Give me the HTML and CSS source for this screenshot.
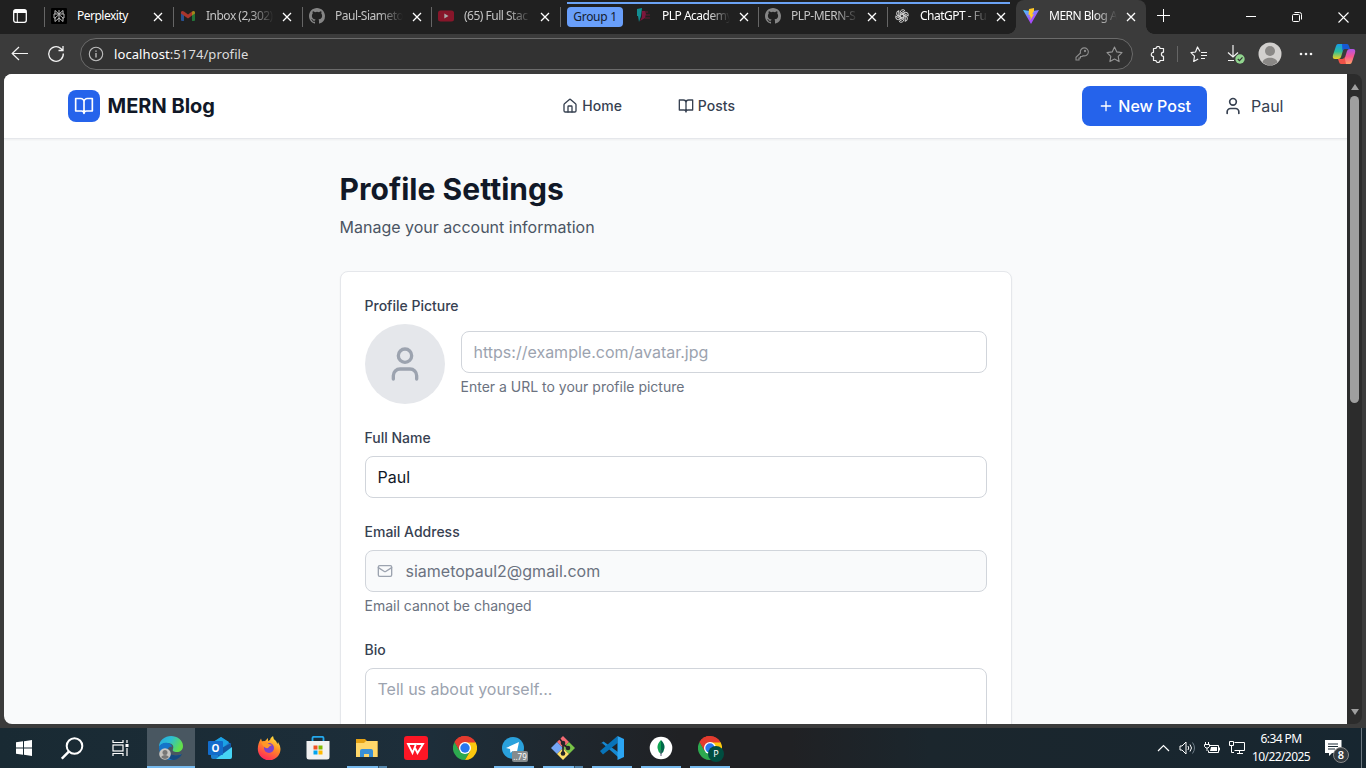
FILE: index.html
```html
<!DOCTYPE html>
<html lang="en">
<head>
<meta charset="utf-8">
<title>MERN Blog App</title>
<link rel="stylesheet" href="styles.css">
</head>
<body>
<svg class="defs" aria-hidden="true">
  <defs>
    <symbol id="close" viewBox="0 0 10 10"><path d="M1 1l8 8M9 1l-8 8" stroke="#fff" stroke-width="1.3" fill="none"/></symbol>
    <symbol id="github" viewBox="0 0 16 16"><path fill="#858585" d="M8 0C3.58 0 0 3.58 0 8c0 3.54 2.29 6.53 5.47 7.59.4.07.55-.17.55-.38v-1.49c-2.23.48-2.7-.95-2.7-.95-.36-.92-.89-1.17-.89-1.17-.73-.5.06-.49.06-.49.8.06 1.23.83 1.23.83.71 1.22 1.87.87 2.33.66.07-.52.28-.87.5-1.07-1.77-.2-3.64-.89-3.64-3.95 0-.87.31-1.59.82-2.15-.08-.2-.36-1.01.08-2.12 0 0 .67-.22 2.2.82a7.6 7.6 0 0 1 4 0c1.53-1.04 2.2-.82 2.2-.82.44 1.11.16 1.92.08 2.12.51.56.82 1.28.82 2.15 0 3.07-1.87 3.75-3.65 3.95.29.25.54.73.54 1.48v2.2c0 .21.15.46.55.38A8 8 0 0 0 16 8c0-4.42-3.58-8-8-8z"/></symbol>
    <symbol id="book" viewBox="0 0 24 24"><path d="M2 3h6a4 4 0 0 1 4 4v14a3 3 0 0 0-3-3H2zM22 3h-6a4 4 0 0 0-4 4v14a3 3 0 0 1 3-3h7z" fill="none" stroke="currentColor" stroke-width="2" stroke-linecap="round" stroke-linejoin="round"/></symbol>
    <symbol id="user" viewBox="0 0 24 24"><g fill="none" stroke="currentColor" stroke-width="2" stroke-linecap="round" stroke-linejoin="round"><path d="M19 21v-2a4 4 0 0 0-4-4H9a4 4 0 0 0-4 4v2"/><circle cx="12" cy="7" r="4"/></g></symbol>
    <symbol id="chrome" viewBox="0 0 24 24"><path d="M12 12L1.6 6A12 12 0 0 1 22.4 6z" fill="#e33b2e"/><path d="M12 12V0A12 12 0 0 0 1.6 6l5.2 9z" fill="#e33b2e"/><path d="M1.6 6A12 12 0 0 0 12 24l5.2-9H6.8z" fill="#2da94f"/><path d="M22.4 6A12 12 0 0 1 12 24l5.2-9L12 6z" fill="#fdc80e"/><path d="M1.6 6A12 12 0 0 1 22.4 6.5H12a6 6 0 0 0-5.2 8.5z" fill="#e33b2e"/><circle cx="12" cy="12" r="6" fill="#fff"/><circle cx="12" cy="12" r="4.7" fill="#2877f0"/></symbol>
  </defs>
</svg>

<div class="browser">
  <div class="tabstrip">
    <div class="workspace"><svg width="14" height="14" viewBox="0 0 14 14"><rect x=".7" y=".7" width="12.6" height="12.6" rx="2" fill="none" stroke="#fff" stroke-width="1.3"/><path d="M1 1h12v3H1z" fill="#fff"/><path d="M4.3 4v9" stroke="#fff"/></svg></div>
    <div class="tab sep bright">
      <svg class="fav" viewBox="0 0 16 16"><rect width="16" height="16" rx="1" fill="#000"/><path d="M8 2v12M8 6L4 2.500V6M8 6l4-3.500V6M3 10V6h10v4M8 6.500L4 10v3.500l4-3.500 4 3.500V10L8 6.500M3 10h1.500M13 10h-1.500" fill="none" stroke="#b9b9b9" stroke-width="1"/></svg>
      <span class="label">Perplexity</span><svg class="x"><use href="#close"/></svg>
    </div>
    <div class="tab sep">
      <svg class="fav" viewBox="0 0 16 16"><path d="M1 4h3v9H2a1 1 0 0 1-1-1z" fill="#27508f"/><path d="M12 4h3v8a1 1 0 0 1-1 1h-2z" fill="#237338"/><path d="M1 4.500C1 3 2.500 2.500 4 3.500L8 6.500l4-3V7.500L8 10.500 1 5.500z" fill="#a7352d"/><path d="M12 3.500c1.500-1 3-.5 3 1V5.500l-3 2z" fill="#a58418"/></svg>
      <span class="label fade">Inbox (2,302)</span><svg class="x"><use href="#close"/></svg>
    </div>
    <div class="tab sep"><svg class="fav"><use href="#github"/></svg><span class="label fade">Paul-Siameto</span><svg class="x"><use href="#close"/></svg></div>
    <div class="tab sep">
      <svg class="fav" viewBox="0 0 16 16"><rect y="2.500" width="16" height="11" rx="2.500" fill="#87162a"/><path d="M6.300 5.500v5l4.200-2.500z" fill="#aaa"/></svg>
      <span class="label fade">(65) Full Stac</span><svg class="x"><use href="#close"/></svg>
    </div>
    <div class="chipbox sep"><span class="chip">Group 1</span></div>
    <div class="grouped">
      <div class="tab bright">
        <svg class="fav" viewBox="0 0 16 16"><path d="M1 1l5-1-1 8-2 6-1-6H1z" fill="#128d91"/><path d="M6 3h3l1 3-1 4-5 3 2-4z" fill="#7b173c"/><path d="M9 4h3M10 7h4M9 10h5" stroke="#6d1734"/></svg>
        <span class="label fade">PLP Academy</span><svg class="x"><use href="#close"/></svg>
      </div>
      <div class="tab sep"><svg class="fav"><use href="#github"/></svg><span class="label fade">PLP-MERN-S</span><svg class="x"><use href="#close"/></svg></div>
      <div class="tab sep bright">
        <svg class="fav" viewBox="0 0 16 16"><g fill="none" stroke="#d0d0d0" stroke-width="1"><path id="petal" d="M6.200 9V4.400a2.700 2.700 0 0 1 4.700-1.800L7 4.900V7.500"/><use href="#petal" transform="rotate(60 8 8)"/><use href="#petal" transform="rotate(120 8 8)"/><use href="#petal" transform="rotate(180 8 8)"/><use href="#petal" transform="rotate(240 8 8)"/><use href="#petal" transform="rotate(300 8 8)"/></g></svg>
        <span class="label fade">ChatGPT - Fu</span><svg class="x"><use href="#close"/></svg>
      </div>
    </div>
    <div class="tab active bright">
      <svg class="fav" viewBox="0 0 16 16"><defs><linearGradient id="v" x2=".6" y2="1"><stop stop-color="#41d1ff"/><stop offset=".7" stop-color="#a64dfe"/></linearGradient></defs><path d="M0 2l8 14L16 2 8.500 3.300z" fill="url(#v)"/><path d="M11 0L6 1l-.5 6L7 6.800 6.600 9l1.200-.4-.5 4L11 6 9 6.400 11 3z" fill="#ffc928"/></svg>
      <span class="label fade">MERN Blog A</span><svg class="x"><use href="#close"/></svg>
    </div>
    <div class="newtab"><svg width="14" height="14"><path d="M6.500 0v13M0 6.500h13" stroke="#fff"/></svg></div>
    <div class="controls">
      <svg width="10" height="12"><path d="M0 5.500h10" stroke="#fff"/></svg>
      <svg width="12" height="12" viewBox="0 0 12 12" fill="none" stroke="#fff"><rect x="1.500" y="3.500" width="7" height="7" rx="1"/><path d="M3.500 1.500H8.500a2 2 0 0 1 2 2v5"/></svg>
      <svg width="11" height="11"><path d="M.5.5l10 10M10.500.5l-10 10" stroke="#fff" stroke-width="1.100"/></svg>
    </div>
  </div>

  <div class="toolbar">
    <div class="navbtns">
      <svg width="18" height="16" fill="none" stroke="#f3f3f3" stroke-width="1.200"><path d="M17 7.500H1.500M8 1L1.200 7.500 8 14"/></svg>
      <svg width="18" height="18" fill="none" stroke="#f3f3f3" stroke-width="1.300"><path d="M16.300 8.500A7.300 7.300 0 1 1 13.800 3.500L16 5.500M16 1v4.500h-4.500"/></svg>
    </div>
    <div class="address">
      <svg width="16" height="16" fill="none" stroke="#bdbdbd" stroke-width="1.100"><circle cx="8" cy="8" r="6.700"/><path d="M8 7v4.500M8 4.500v1.300" stroke="#ddd"/></svg>
      <span class="url"><b>localhost</b>:5174/profile</span>
      <svg class="key" width="14" height="14" fill="none" stroke="#8d8d8d" stroke-width="1.100"><path d="M5.500 6a4 4 0 1 1 2.700 2.700L7 9.500H5.500V11H4v2H1v-2.700z"/><circle cx="10" cy="4" r=".6"/></svg>
      <svg width="17" height="17" viewBox="0 0 17 17" fill="none" stroke="#959595" stroke-width="1.100" stroke-linejoin="round"><path d="M8.500 1l2.300 4.900 5.200.7-3.800 3.700.9 5.300-4.600-2.600-4.600 2.600.9-5.300L1 6.600l5.200-.7z"/></svg>
    </div>
    <div class="actions">
      <svg width="16" height="17" fill="none" stroke="#f3f3f3" stroke-width="1.200" stroke-linejoin="round"><path d="M3.500 2.500h2.500a2 2 0 0 1 4 0H13.500V6.200a2 2 0 0 0 0 4.200V14.500H10a2 2 0 0 1-4 0H3.500V10.700a2.200 2.200 0 0 1 0-4.400z"/></svg>
      <i class="divider"></i>
      <svg class="favs" width="18" height="17" fill="none" stroke="#f3f3f3" stroke-width="1.200" stroke-linejoin="round"><path d="M10 5.500L7.500 1 5.500 6 1 6.600l3.500 3.600-.8 5.300 4.500-2.600M11 6.500h6M11 9.500h6M11 12.500h4"/></svg>
      <svg class="down" width="20" height="20" fill="none" stroke="#f3f3f3" stroke-width="1.200"><path d="M7 1v12M2 8.500L7 13l5-4.500M2 16.500h6"/><circle cx="14" cy="15" r="4.700" fill="#91d58f" stroke="none"/><path d="M11.800 15l1.700 1.700 3-3.300" stroke="#333"/></svg>
      <svg class="person" width="24" height="24"><circle cx="12" cy="12" r="11.500" fill="#d2d0ce"/><circle cx="12" cy="9" r="5" fill="#8a8886"/><path d="M4.500 20.500C5 14 19 14 19.500 20.500Q12 26 4.500 20.500" fill="#8a8886"/></svg>
      <svg class="more" width="14" height="4" fill="#f3f3f3"><circle cx="2" cy="2" r="1.300"/><circle cx="7" cy="2" r="1.300"/><circle cx="12" cy="2" r="1.300"/></svg>
      <svg class="copilot" width="24" height="22" viewBox="0 0 24 22"><defs><linearGradient id="c1" y2="1" x2="0"><stop stop-color="#169bea"/><stop offset=".5" stop-color="#2bbd9b"/><stop offset="1" stop-color="#f2cf20"/></linearGradient><linearGradient id="c2" y2="1" x2="0"><stop stop-color="#ae55e8"/><stop offset=".5" stop-color="#f7568f"/><stop offset="1" stop-color="#ffa267"/></linearGradient></defs><path d="M6 1h7L9 14Q8.500 16 6 16H3q-3 0-2-4L4 3q.6-2 2-2z" fill="url(#c1)"/><path d="M10 1h5q1.500 0 2 2l1 3h-5q-2 0-2.500 2z" fill="#1759d4"/><path d="M18 6h3q3 0 2 4l-3 9q-.6 2-2 2h-7l4-13q.5-2 3-2z" fill="url(#c2)"/><path d="M14 21H9q-1.500 0-2-2l-1-3h4q2 0 2.500-2z" fill="#ef5248"/></svg>
    </div>
  </div>

  <div class="viewport">
    <div class="page">
      <header class="header">
        <div class="header-inner">
          <div class="brand"><span class="brand-icon"><svg width="20" height="20"><use href="#book"/></svg></span><span>MERN Blog</span></div>
          <nav class="nav">
            <a><svg width="16" height="16" viewBox="0 0 24 24" fill="none" stroke="currentColor" stroke-width="2" stroke-linecap="round" stroke-linejoin="round"><path d="M15 21v-8a1 1 0 0 0-1-1h-4a1 1 0 0 0-1 1v8"/><path d="M3 10a2 2 0 0 1 .709-1.528l7-5.999a2 2 0 0 1 2.582 0l7 5.999A2 2 0 0 1 21 10v9a2 2 0 0 1-2 2H5a2 2 0 0 1-2-2z"/></svg>Home</a>
            <a><svg width="16" height="16"><use href="#book"/></svg>Posts</a>
          </nav>
          <div class="account">
            <button class="new-post"><svg width="16" height="16" viewBox="0 0 24 24"><path d="M5 12h14M12 5v14" stroke="currentColor" stroke-width="2" stroke-linecap="round"/></svg>New Post</button>
            <span class="me"><svg width="20" height="20"><use href="#user"/></svg>Paul</span>
          </div>
        </div>
      </header>
      <main class="main">
        <h1>Profile Settings</h1>
        <p class="lead">Manage your account information</p>
        <form class="card">
          <div class="field">
            <label>Profile Picture</label>
            <div class="picture">
              <span class="avatar"><svg width="40" height="40"><use href="#user"/></svg></span>
              <div class="grow"><div class="input placeholder">https://example.com/avatar.jpg</div><p class="hint">Enter a URL to your profile picture</p></div>
            </div>
          </div>
          <div class="field"><label>Full Name</label><div class="input">Paul</div></div>
          <div class="field"><label>Email Address</label>
            <div class="input disabled"><svg width="16" height="16" viewBox="0 0 24 24" fill="none" stroke="currentColor" stroke-width="2" stroke-linecap="round" stroke-linejoin="round"><path d="m22 7-8.991 5.727a2 2 0 0 1-2.009 0L2 7"/><rect x="2" y="4" width="20" height="16" rx="2"/></svg><span>siametopaul2@gmail.com</span></div>
            <p class="hint">Email cannot be changed</p></div>
          <div class="field"><label>Bio</label><div class="input area placeholder">Tell us about yourself...</div></div>
        </form>
      </main>
    </div>
    <div class="scrollbar"><i class="up"></i><i class="thumb"></i><i class="dn"></i></div>
  </div>
</div>

<div class="taskbar">
  <div class="sys"><svg width="16" height="16" fill="#fff"><path d="M0 2.300L7 1.300V7.500H0zM8 1.200L16 0V7.500H8zM0 8.500h7v6.200L0 13.700zM8 8.500h8V16L8 14.800z"/></svg></div>
  <div class="sys"><svg width="23" height="23" fill="none" stroke="#fff" stroke-width="2"><circle cx="13.500" cy="9" r="7.800"/><path d="M7.800 14.700L.8 21.700" stroke-width="2.500"/></svg></div>
  <div class="sys"><svg width="17" height="16" fill="none" stroke="#fff" stroke-width="1.200"><path d="M1 0v2.500h10V0M1 16v-2.500h10V16"/><rect x="1" y="5" width="10" height="6"/><path d="M15 0v3M15 8v8"/><path d="M13.500 4h3v3h-3z" fill="#fff" stroke="none"/></svg></div>
  <div class="app current"><svg width="24" height="24" viewBox="0 0 24 24"><defs><linearGradient id="e" x2="1" y2=".4"><stop stop-color="#26a9e3"/><stop offset=".5" stop-color="#2dbed1"/><stop offset="1" stop-color="#62df4b"/></linearGradient></defs><path d="M0 11C0 4 6 0 12 0s12 4 12 10c0 4-3 6-6 6-3.500 0-5-1-4-3 1.500-4-2-6-6-6-4 0-7 2-8 4z" fill="url(#e)"/><path d="M0 11c1-3 5-5 9-4 2 .5 4 2 4 4-3-1-5 2-4 5 1.500 4 8 5 13 2-3 5-7 6-10 6C5 24 0 18 0 11z" fill="#1474c9"/><path d="M9 15c1 4 8 6 14 3-2 4-6 6-9 6-5-1-6-5-5-9z" fill="#164a80"/><circle cx="6" cy="18" r="5.800" fill="#c6c4c1"/><circle cx="6" cy="16.500" r="2.500" fill="#777"/><path d="M2 21q4-4 8 0-4 4-8 0" fill="#777"/></svg></div>
  <div class="app"><svg width="24" height="24" viewBox="0 0 24 24"><path d="M3 8l10-7 10 7v13q0 2-2 2H5q-2 0-2-2z" fill="#1b7fce"/><path d="M5 6l8-5 8 5-8 8H5z" fill="#1ba2e5"/><path d="M10 14l13-7v8L10 20z" fill="#1457a3"/><path d="M8 23L24 11v10q0 2-2 2z" fill="#45d4f5"/><rect y="5" width="15" height="14" rx="1" fill="#126ccb"/><text x="7.500" y="16.200" class="glyph" text-anchor="middle">O</text></svg></div>
  <div class="app"><svg width="24" height="24" viewBox="0 0 24 24"><defs><linearGradient id="f" x1=".8" y1="0" x2=".3" y2="1"><stop stop-color="#ffec43"/><stop offset=".45" stop-color="#ff8b25"/><stop offset="1" stop-color="#ff225d"/></linearGradient></defs><path d="M.8 13C.8 9 2 6 4 2.500L5 5.500l3-.5L11 2v3l2-1q0-2 3-4 0 3 3 5l1.500 3L21 6q2.500 4 2.500 7a11.300 11.300 0 0 1-22.700 0z" fill="url(#f)"/><circle cx="12" cy="12" r="5" fill="#7c42cb"/><path d="M4 6q4-2 8 2l3 1q-3 1-4 3-4 1-7-6" fill="#ff9728"/></svg></div>
  <div class="app"><svg width="24" height="24" viewBox="0 0 24 24"><path d="M6.500 6V2q0-1.200 1.500-1.200h8q1.500 0 1.500 1.200v4" fill="none" stroke="#24a8ec" stroke-width="1.800"/><path d="M.5 5h23v16q0 2.500-2.500 2.500H3Q.5 23.500.5 21z" fill="#f1f1f1"/><path d="M7.500 9.500h4v4h-4z" fill="#f25022"/><path d="M12.500 9.500h4v4h-4z" fill="#7fba00"/><path d="M7.500 14.500h4v4h-4z" fill="#00a4ef"/><path d="M12.500 14.500h4v4h-4z" fill="#ffb900"/></svg></div>
  <div class="app open multi"><svg width="24" height="24" viewBox="0 0 24 24"><path d="M1 3h9l2 2h10.500v16H1z" fill="#e5a214"/><path d="M1 7h8l2-2h11.500v16H1z" fill="#ffd76a"/><path d="M5 21v-6q0-2 2-2h9q2 0 2 2v6h-4v-3H9v3z" fill="#398fd5"/></svg></div>
  <div class="app"><svg width="24" height="24" viewBox="0 0 24 24"><rect width="24" height="24" rx="3" fill="#fd1625"/><path d="M4 8h8l-3.500 9zM10.500 11l3 6L19 8h-6" fill="none" stroke="#fff" stroke-width="1.900"/></svg></div>
  <div class="app"><svg width="24" height="24"><use href="#chrome"/></svg></div>
  <div class="app open"><svg width="24" height="24" viewBox="0 0 24 24"><circle cx="11" cy="12" r="11" fill="#2aa1dc"/><path d="M4 12l13-6-2.500 12-4-3-2 2-.5-4z" fill="#fff"/></svg><span class="count">..79</span></div>
  <div class="app open multi"><svg width="24" height="24" viewBox="0 0 24 24"><path d="M12 0l6 6-6 6-6-6z" fill="#f36a73"/><path d="M18 6l6 6-6 6-6-6z" fill="#79c447"/><path d="M6 6l6 6-6 6-6-6z" fill="#75a5f5"/><path d="M12 12l6 6-6 6-6-6z" fill="#ffdf68"/><path d="M8 2l4 5v11M12 8l5 4" stroke="#25252a" stroke-width="1.700" fill="none"/><circle cx="12" cy="7" r="2.300" fill="#25252a"/><circle cx="17" cy="12" r="2.300" fill="#25252a"/><circle cx="12" cy="17.500" r="2.300" fill="#25252a"/></svg></div>
  <div class="app open"><svg width="24" height="24" viewBox="0 0 24 24"><path d="M2 7l16 14v-5L3.500 5.500 0 8z" fill="#1688d1"/><path d="M17.500 0L0 15l3 3.500L17.500 7z" fill="#0874ba"/><path d="M17.500 0L24 3v18l-6.500 3z" fill="#2ba5f3"/></svg></div>
  <div class="app open"><svg width="24" height="24" viewBox="0 0 24 24"><circle cx="12" cy="12" r="11.300" fill="#fff"/><path d="M12 4q-4 4-3.500 8 .5 4 3.500 6z" fill="#10a352"/><path d="M12 4q4 4 3.500 8-.5 4-3.500 6z" fill="#00684a"/><path d="M12 14v6" stroke="#557"/></svg></div>
  <div class="app open"><svg width="24" height="24"><use href="#chrome"/></svg><span class="profile">P</span></div>

  <div class="tray">
    <svg width="13" height="8" fill="none" stroke="#fff" stroke-width="1.200"><path d="M1 7l5.500-5.500L12 7"/></svg>
    <svg width="17" height="14" fill="none" stroke="#fff"><path d="M1 5h2l4-4v12L3 9H1zM9 5q1.500 2 0 4M11 3.500q3 3.500 0 7"/><path d="M13.500 1.500q4 5.500 0 11" stroke="#71808b"/></svg>
    <svg width="17" height="13" fill="none" stroke="#fff"><path d="M6 3.500h8.500v7h-10v-2M15.500 5.500v3"/><path d="M7 5h6v4H6z" fill="#fff" stroke="none"/><path d="M1.500 0v2M4.500 0v2M.5 2.500h5v2L4 6H2L.5 4.500zM3 6v3"/></svg>
    <svg width="17" height="14" fill="none" stroke="#fff"><path d="M5.500 1.500h10v8h-10M8 12.500h6M10.500 9.500v3M.5.500h4v4h-4zM2.500 4.500v7H5"/></svg>
    <div class="clock"><span>6:34 PM</span><span>10/22/2025</span></div>
    <div class="notify"><svg width="17" height="16"><path d="M0 0h16.500v13H7l-3 3v-3H0z" fill="#fff"/><path d="M3 4h10M3 6.500h10M3 9h7" stroke="#1b2b36"/></svg><span class="badge">8</span></div>
    <i class="desktop"></i>
  </div>
</div>
</body>
</html>
```
FILE: styles.css
```css
* { box-sizing: border-box; }
body { margin: 0; width: 1366px; height: 768px; overflow: hidden; display: flex; flex-direction: column; background: #3b3b3b; font-family: Inter, sans-serif; }
svg { display: block; flex: none; }
.defs { position: absolute; width: 0; height: 0; }
h1, p { margin: 0; }

.browser { height: 728px; display: flex; flex-direction: column; font-family: "Noto Sans", sans-serif; }
.tabstrip { height: 34px; flex: none; display: flex; background: #202020; }
.workspace { width: 44px; padding: 9px 0 0 13px; }
.tab { width: 129px; height: 34px; padding: 0 10px 2px 7px; display: flex; align-items: center; color: #c4c4c4; }
.sep { background: linear-gradient(#666, #666) 0 7px / 1px 20px no-repeat; }
.bright { color: #fff; }
.fav { width: 16px; height: 16px; margin-right: 10px; }
.label { width: 68px; font-size: 12px; letter-spacing: -0.5px; line-height: 18px; white-space: nowrap; }
.fade { -webkit-mask-image: linear-gradient(90deg, #000 65%, transparent); mask-image: linear-gradient(90deg, #000 65%, transparent); }
.x { width: 10px; height: 10px; margin-left: 8.5px; margin-top: 1px; }
.chipbox { width: 69px; padding: 7px 6px 0 7px; }
.chipbox::before { content: ""; display: block; height: 2px; margin: -5px -6px 3px 0; background: #6ba3f5; }
.chip { display: block; width: 56px; height: 20px; border-radius: 4px; background: #699ffa; color: #15202e; font-size: 12px; letter-spacing: -0.3px; line-height: 20px; text-align: center; }
.grouped { display: flex; background: linear-gradient(#6ba3f5, #6ba3f5) 0 2px / 381px 2px no-repeat; }
.active { position: relative; width: 130px; background: #3b3b3b; border-radius: 8px 8px 0 0; }
.active::before, .active::after { content: ""; position: absolute; bottom: 0; width: 8px; height: 8px; }
.active::before { left: -8px; background: radial-gradient(circle at 0 0, transparent 7.5px, #3b3b3b 8px); }
.active::after { right: -8px; background: radial-gradient(circle at 100% 0, transparent 7.5px, #3b3b3b 8px); }
.newtab { padding: 9px 0 0 11px; }
.controls { margin-left: auto; padding-right: 17px; display: flex; align-items: center; gap: 35px; }

.toolbar { height: 40px; flex: none; display: flex; align-items: center; background: #3b3b3b; }
.navbtns { width: 80px; padding-left: 11px; display: flex; align-items: center; gap: 18px; }
.address { width: 1053px; height: 32px; padding: 0 9px 0 7px; border: 1px solid #6b6b6b; border-radius: 16px; background: #323232; display: flex; align-items: center; }
.url { margin-left: 10px; color: #ddd; font-size: 13px; letter-spacing: 0.09px; }
.url b { font-weight: 400; color: #fff; }
.key { margin-left: auto; margin-right: 17px; }
.actions { flex: 1; padding-left: 17px; display: flex; align-items: center; }
.divider { width: 1px; height: 16px; margin: 0 12px 0 11px; background: #656565; }
.down { margin-left: 18px; }
.person { margin-left: 12px; }
.more { margin-left: 17px; }
.copilot { margin-left: 19px; }

.viewport { height: 650px; margin: 0 4px; display: flex; border-radius: 8px; overflow: hidden; }
.page { width: 1343px; height: 650px; overflow: hidden; background: #f9fafb; font-family: Inter, sans-serif; font-size: 16px; line-height: 24px; }
.scrollbar { width: 15px; background: #2c2c2c; display: flex; flex-direction: column; align-items: center; padding: 10px 0 9px; }
.thumb { width: 9px; height: 307px; margin-top: 6px; border-radius: 5px; background: #9f9f9f; }
.up, .dn { border: 4.5px solid transparent; }
.up { border-top-width: 0; border-bottom: 6px solid #9f9f9f; }
.dn { border-bottom-width: 0; border-top: 6px solid #9f9f9f; margin-top: auto; }

.header { height: 65px; background: #fff; border-bottom: 1px solid #e5e7eb; box-shadow: 0 1px 2px rgba(0, 0, 0, 0.05); }
.header-inner { max-width: 1280px; height: 64px; margin: 0 auto; padding: 0 32px; display: flex; align-items: center; justify-content: space-between; }
.brand { display: flex; align-items: center; gap: 8px; color: #111827; font-size: 20px; font-weight: 700; line-height: 28px; }
.brand-icon { width: 32px; height: 32px; display: grid; place-items: center; border-radius: 8px; background: #2563eb; color: #fff; }
.nav { display: flex; gap: 32px; color: #374151; font-size: 14px; font-weight: 500; line-height: 20px; }
.nav a { padding: 8px 12px; display: flex; align-items: center; gap: 4px; }
.account { display: flex; align-items: center; gap: 16px; }
.new-post { height: 40px; padding: 8px 16px; border: 0; border-radius: 8px; background: #2563eb; color: #fff; font: 500 16px/24px Inter, sans-serif; display: flex; align-items: center; gap: 4px; }
.me { display: flex; align-items: center; gap: 8px; color: #374151; }

.main { width: 672px; margin: 0 auto; padding-top: 32px; }
.main h1 { color: #111827; font-size: 30px; font-weight: 700; line-height: 36px; letter-spacing: 0.04px; }
.lead { margin: 8px 0 32px; color: #4b5563; }
.card { height: 900px; padding: 24px; border: 1px solid #e5e7eb; border-radius: 8px; background: #fff; box-shadow: 0 1px 2px rgba(0, 0, 0, 0.05); display: flex; flex-direction: column; gap: 24px; }
.field label { display: block; margin-bottom: 8px; color: #374151; font-size: 14px; font-weight: 500; line-height: 20px; }
.picture { display: flex; align-items: center; gap: 16px; }
.avatar { width: 80px; height: 80px; display: grid; place-items: center; border-radius: 50%; background: #e5e7eb; color: #9ca3af; }
.grow { flex: 1; }
.input { height: 42px; padding: 8px 12px; border: 1px solid #d1d5db; border-radius: 8px; background: #fff; color: #111827; }
.placeholder { color: #9ca3af; }
.disabled { padding-left: 11px; display: flex; align-items: center; gap: 13px; background: #f9fafb; color: #6b7280; }
.disabled svg { color: #9ca3af; }
.area { height: 114px; }
.hint { margin-top: 4px; color: #6b7280; font-size: 14px; line-height: 20px; }

.taskbar { height: 40px; display: flex; background: linear-gradient(90deg, #192a33 0, #1d2e3a 430px, #202124 680px, #202124 790px, #1b262d 930px, #172630 1366px); font-family: "Noto Sans", sans-serif; color: #fff; }
.sys { width: 48px; display: grid; place-items: center; }
.sys:nth-child(3) { margin-right: 3px; }
.app { position: relative; width: 48px; margin-right: 1px; display: grid; place-items: center; }
.current { background: #495761; border-bottom: 2px solid #76b9ed; padding-top: 2px; }
.open { background: linear-gradient(#76b9ed, #76b9ed) 4px 38px / 40px 2px no-repeat; }
.multi { background: linear-gradient(90deg, #76b9ed 31px, #34556e 31px, #34556e 32px, #5587ad 32px) 4px 38px / 40px 2px no-repeat; }
.glyph { font: 700 10px "Noto Sans", sans-serif; fill: #fff; }
.count { position: absolute; left: 22px; top: 23px; width: 16px; height: 11px; border-radius: 2px; background: #858b8d; font-size: 8px; line-height: 11px; text-align: center; }
.profile { position: absolute; left: 22px; top: 18px; width: 16px; height: 16px; border-radius: 50%; background: #004d40; font-size: 9px; line-height: 16px; text-align: center; }
.tray { margin-left: auto; display: flex; align-items: center; }
.tray > svg { margin-right: 8px; }
.tray > svg:first-child { margin-right: 9px; }
.tray > svg:nth-child(4) { margin-right: 6px; }
.clock { width: 58px; margin-right: 15px; display: flex; flex-direction: column; align-items: center; font-size: 12px; line-height: 18px; letter-spacing: -0.6px; white-space: nowrap; }
.notify { position: relative; width: 36px; }
.badge { position: absolute; left: 8px; top: 7px; width: 16px; height: 16px; border: 1px solid #888; border-radius: 50%; background: #343b40; font-size: 11px; font-weight: 600; line-height: 14px; text-align: center; }
.desktop { width: 5px; height: 40px; border-left: 1px solid #6c7780; }
```
